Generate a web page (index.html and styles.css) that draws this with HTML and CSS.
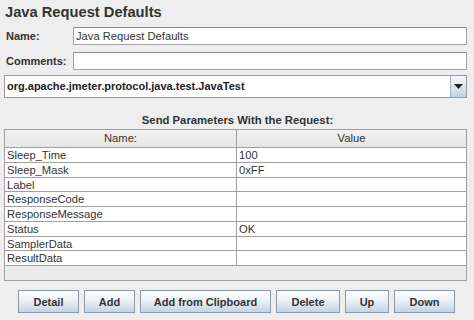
FILE: index.html
```html
<!DOCTYPE html>
<html>
<head>
<meta charset="utf-8">
<link rel="stylesheet" href="styles.css">
</head>
<body>
<div class="panel">
  <div class="title">Java Request Defaults</div>
  <div class="field-row">
    <label class="lbl">Name:</label>
    <div class="input">Java Request Defaults</div>
  </div>
  <div class="field-row">
    <label class="lbl">Comments:</label>
    <div class="input"></div>
  </div>
  <div class="combo">
    <div class="combo-text">org.apache.jmeter.protocol.java.test.JavaTest</div>
    <div class="combo-btn"><svg width="9" height="5" viewBox="0 0 9 5"><path d="M0 0H9L4.5 5Z" fill="#222"/></svg></div>
  </div>
  <div class="caption">Send Parameters With the Request:</div>
  <div class="scroll">
    <div class="thead">
      <div class="th">Name:</div>
      <div class="th">Value</div>
    </div>
    <div class="tr"><div class="td">Sleep_Time</div><div class="td">100</div></div>
    <div class="tr"><div class="td">Sleep_Mask</div><div class="td">0xFF</div></div>
    <div class="tr"><div class="td">Label</div><div class="td"></div></div>
    <div class="tr"><div class="td">ResponseCode</div><div class="td"></div></div>
    <div class="tr"><div class="td">ResponseMessage</div><div class="td"></div></div>
    <div class="tr"><div class="td">Status</div><div class="td">OK</div></div>
    <div class="tr"><div class="td">SamplerData</div><div class="td"></div></div>
    <div class="tr"><div class="td">ResultData</div><div class="td"></div></div>
  </div>
  <div class="buttons">
    <button class="btn w-detail">Detail</button>
    <button class="btn w-add">Add</button>
    <button class="btn w-clip">Add from Clipboard</button>
    <button class="btn w-del">Delete</button>
    <button class="btn w-up">Up</button>
    <button class="btn w-down">Down</button>
  </div>
</div>
</body>
</html>
```

FILE: styles.css
```css
html, body {
  margin: 0;
  padding: 0;
  background: #eeeeee;
}
body {
  width: 474px;
  height: 320px;
  overflow: hidden;
  font-family: "Liberation Sans", Arial, sans-serif;
  font-size: 11.2px;
  color: #222;
}
.panel {
  display: flex;
  flex-direction: column;
  padding: 0 7px 0 4px;
}
.title {
  font-size: 14.7px;
  font-weight: bold;
  color: #333;
  height: 20px;
  line-height: 20px;
  margin-top: 2px;
  padding-left: 1px;
}
.field-row {
  display: flex;
  align-items: center;
  height: 18px;
  margin-top: 5px;
}
.field-row + .field-row {
  margin-top: 7px;
}
.lbl {
  width: 67px;
  padding-left: 2px;
  font-size: 11px;
  font-weight: bold;
  color: #333;
}
.input {
  flex: 1;
  height: 16px;
  line-height: 16px;
  border: 1px solid #a3a3a3;
  border-top-color: #8c8c8c;
  background: #fff;
  padding-left: 2px;
  color: #333;
}
.combo {
  display: flex;
  height: 21px;
  margin-top: 5px;
  border: 1px solid #9a9a9a;
  background: #fff;
}
.combo-text {
  flex: 1;
  line-height: 21px;
  padding-left: 2px;
  font-size: 11px;
  font-weight: bold;
  color: #222;
}
.combo-btn {
  width: 15px;
  display: flex;
  align-items: center;
  justify-content: center;
  border-left: 1px solid #a8b4c0;
  background: linear-gradient(#f4f7fb, #c3d3e3);
}
.caption {
  text-align: center;
  font-size: 11.3px;
  font-weight: bold;
  color: #333;
  height: 16px;
  line-height: 16px;
  margin-top: 14px;
  padding-left: 4px;
}
.scroll {
  height: 150px;
  margin-top: 1px;
  border: 1px solid #a0a0a0;
  background: #ececec;
}
.thead, .tr {
  display: grid;
  grid-template-columns: 231px 1fr;
}
.thead {
  height: 17px;
  border-bottom: 1px solid #a0a0a0;
  background: linear-gradient(#f0f0f0, #e6e6e6);
}
.th {
  text-align: center;
  line-height: 17px;
  color: #333;
}
.th + .th {
  border-left: 1px solid #a0a0a0;
}
.tr {
  height: 13.75px;
  border-bottom: 1px solid #a0a0a0;
  background: #fff;
}
.td {
  line-height: 14px;
  padding-left: 2px;
  color: #333;
  overflow: hidden;
}
.td + .td {
  border-left: 1px solid #a0a0a0;
}
.buttons {
  display: flex;
  gap: 5px;
  margin-top: 9px;
  padding-left: 14px;
}
.btn {
  height: 23px;
  padding: 0;
  font-family: "Liberation Sans", Arial, sans-serif;
  font-size: 11px;
  font-weight: bold;
  color: #333;
  border: 1px solid #8a9aaa;
  background: linear-gradient(#ffffff 0%, #eef3f8 40%, #c3d4e6 100%);
  border-radius: 0;
}
.w-detail { width: 61px; }
.w-add { width: 51px; }
.w-clip { width: 131px; }
.w-del { width: 64px; }
.w-up { width: 44px; }
.w-down { width: 61px; }
```
